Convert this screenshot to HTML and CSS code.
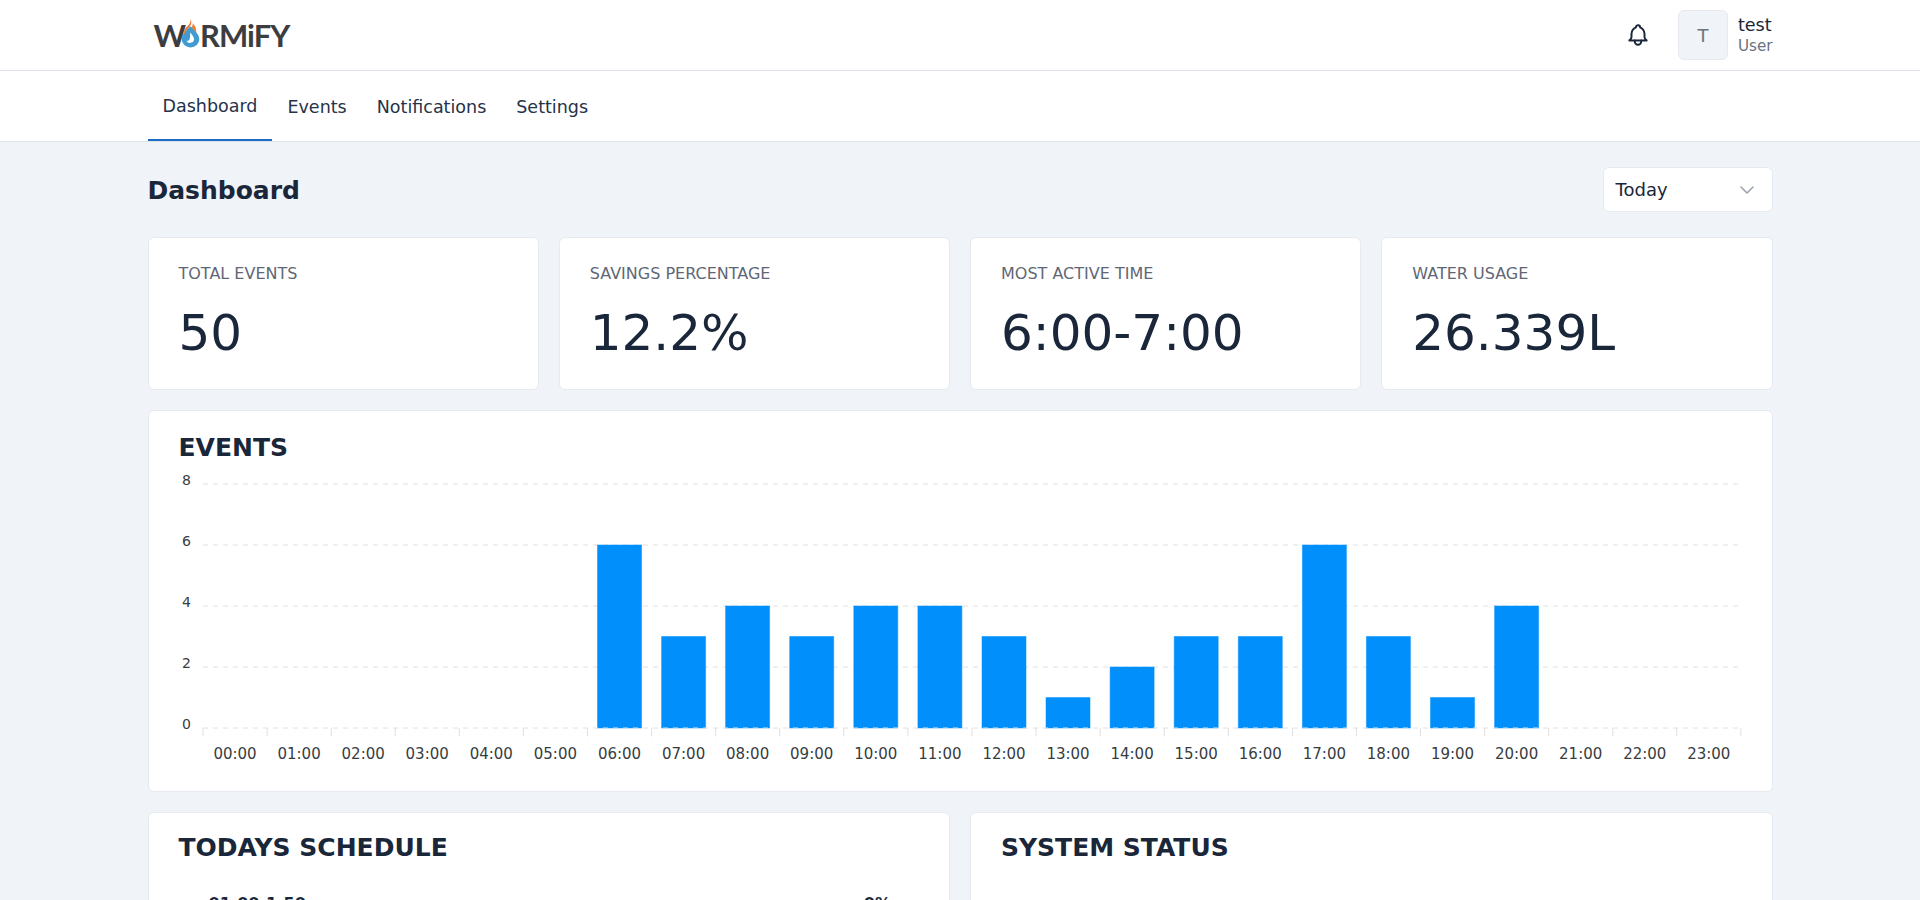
FILE: index.html
```html
<!DOCTYPE html>
<html lang="en">

<head>
    <meta charset="UTF-8">
    <meta name="viewport" content="width=device-width, initial-scale=1.0">
    <title>Wormify Dashboard</title>
    <link rel="stylesheet" href="styles.css">
</head>

<body>
    <div class="app">
        <header class="topbar">
            <div class="wrap topbar-row">
                <div class="logo">
                    <span>W</span>
                    <svg class="logo-drop" viewBox="0 0 18 28" aria-hidden="true">
                        <path d="M9 7c4 4 8.500 8 8.500 12.500a8.500 8 0 0 1-17 0C.5 15 5 11 9 7z" fill="#3f9bd0" />
                        <path d="M9 0c1.500 3 1 5-1 7.500C6 10 3.500 12 2.500 17 1.500 12 4 9 6 7c2-2 3.500-4 3-7z" fill="#ef7b2d" />
                        <path d="M11 4c3 3 4 6 3.500 10-1-2.500-2.500-4-4.500-6 1-1 1.300-2.500 1-4z" fill="#ef7b2d" />
                        <path d="M8.500 13c2.500 2.500 4 4.500 4 7a4 3.800 0 0 1-7.500 1c1.500.5 3-.5 3.500-3 .3-1.800.2-3.500 0-5z" fill="#fff" />
                    </svg>
                    <span class="logo-rest">RMiFY</span>
                </div>
                <div class="topbar-right">
                    <svg class="bell" viewBox="0 0 24 24" fill="none" stroke="#1a2639" stroke-width="1.8" stroke-linecap="round" stroke-linejoin="round" aria-hidden="true">
                        <path d="M10 5a2 2 0 1 1 4 0a7 7 0 0 1 4 6v3a4 4 0 0 0 2 3h-16a4 4 0 0 0 2 -3v-3a7 7 0 0 1 4 -6" />
                        <path d="M9 17v1a3 3 0 0 0 6 0v-1" />
                    </svg>
                    <div class="avatar">T</div>
                    <div class="user">
                        <div class="user-name">test</div>
                        <div class="user-role">User</div>
                    </div>
                </div>
            </div>
        </header>

        <nav class="tabs">
            <div class="wrap tabs-row">
                <a class="tab active">Dashboard</a>
                <a class="tab">Events</a>
                <a class="tab">Notifications</a>
                <a class="tab">Settings</a>
            </div>
        </nav>

        <main class="wrap">
            <div class="page-head">
                <h1 class="page-title">Dashboard</h1>
                <div class="range">
                    <span>Today</span>
                    <svg class="range-arrow" viewBox="0 0 14 8" fill="none" stroke="#9ca3af" stroke-width="1.6" stroke-linecap="round" stroke-linejoin="round" aria-hidden="true">
                        <path d="M1 1l6 6 6-6" />
                    </svg>
                </div>
            </div>

            <section class="stats">
                <div class="card stat">
                    <div class="stat-label">TOTAL EVENTS</div>
                    <div class="stat-value">50</div>
                </div>
                <div class="card stat">
                    <div class="stat-label">SAVINGS PERCENTAGE</div>
                    <div class="stat-value">12.2%</div>
                </div>
                <div class="card stat">
                    <div class="stat-label">MOST ACTIVE TIME</div>
                    <div class="stat-value">6:00-7:00</div>
                </div>
                <div class="card stat">
                    <div class="stat-label">WATER USAGE</div>
                    <div class="stat-value">26.339L</div>
                </div>
            </section>

            <section class="card chart-card">
                <h2 class="card-title">EVENTS</h2>
                <svg class="chart" viewBox="0 0 1623 320">
                    <!-- grid -->
                    <g class="grid">
                        <line x1="54" x2="1592" y1="14" y2="14" />
                        <line x1="54" x2="1592" y1="75" y2="75" />
                        <line x1="54" x2="1592" y1="136" y2="136" />
                        <line x1="54" x2="1592" y1="197" y2="197" />
                    </g>
                    <!-- bars -->
                    <g class="bars">
                        <rect x="448.500" y="75" width="44" height="183" />
                        <rect x="512.600" y="166.500" width="44" height="91.500" />
                        <rect x="576.600" y="136" width="44" height="122" />
                        <rect x="640.700" y="166.500" width="44" height="91.500" />
                        <rect x="704.800" y="136" width="44" height="122" />
                        <rect x="768.900" y="136" width="44" height="122" />
                        <rect x="833" y="166.500" width="44" height="91.500" />
                        <rect x="897" y="227.500" width="44" height="30.500" />
                        <rect x="961.100" y="197" width="44" height="61" />
                        <rect x="1025.200" y="166.500" width="44" height="91.500" />
                        <rect x="1089.300" y="166.500" width="44" height="91.500" />
                        <rect x="1153.400" y="75" width="44" height="183" />
                        <rect x="1217.400" y="166.500" width="44" height="91.500" />
                        <rect x="1281.500" y="227.500" width="44" height="30.500" />
                        <rect x="1345.600" y="136" width="44" height="122" />
                    </g>
                    <g class="grid">
                        <line x1="54" x2="1592" y1="258" y2="258" />
                    </g>
                    <!-- x ticks -->
                    <g class="ticks">
                        <line x1="54" x2="54" y1="258" y2="266.500" />
                        <line x1="118.1" x2="118.1" y1="258" y2="266.500" />
                        <line x1="182.200" x2="182.200" y1="258" y2="266.500" />
                        <line x1="246.200" x2="246.200" y1="258" y2="266.500" />
                        <line x1="310.300" x2="310.300" y1="258" y2="266.500" />
                        <line x1="374.400" x2="374.400" y1="258" y2="266.500" />
                        <line x1="438.500" x2="438.500" y1="258" y2="266.500" />
                        <line x1="502.600" x2="502.600" y1="258" y2="266.500" />
                        <line x1="566.600" x2="566.600" y1="258" y2="266.500" />
                        <line x1="630.700" x2="630.700" y1="258" y2="266.500" />
                        <line x1="694.800" x2="694.800" y1="258" y2="266.500" />
                        <line x1="758.900" x2="758.900" y1="258" y2="266.500" />
                        <line x1="823" x2="823" y1="258" y2="266.500" />
                        <line x1="887" x2="887" y1="258" y2="266.500" />
                        <line x1="951.100" x2="951.100" y1="258" y2="266.500" />
                        <line x1="1015.200" x2="1015.200" y1="258" y2="266.500" />
                        <line x1="1079.300" x2="1079.300" y1="258" y2="266.500" />
                        <line x1="1143.400" x2="1143.400" y1="258" y2="266.500" />
                        <line x1="1207.400" x2="1207.400" y1="258" y2="266.500" />
                        <line x1="1271.500" x2="1271.500" y1="258" y2="266.500" />
                        <line x1="1335.600" x2="1335.600" y1="258" y2="266.500" />
                        <line x1="1399.700" x2="1399.700" y1="258" y2="266.500" />
                        <line x1="1463.800" x2="1463.800" y1="258" y2="266.500" />
                        <line x1="1527.800" x2="1527.800" y1="258" y2="266.500" />
                        <line x1="1591.900" x2="1591.900" y1="258" y2="266.500" />
                    </g>
                    <!-- y labels -->
                    <g class="y-labels">
                        <text x="42" y="15">8</text>
                        <text x="42" y="76">6</text>
                        <text x="42" y="137">4</text>
                        <text x="42" y="198">2</text>
                        <text x="42" y="259">0</text>
                    </g>
                    <!-- x labels -->
                    <g class="x-labels">
                        <text x="86" y="289">00:00</text>
                        <text x="150.1" y="289">01:00</text>
                        <text x="214.2" y="289">02:00</text>
                        <text x="278.2" y="289">03:00</text>
                        <text x="342.3" y="289">04:00</text>
                        <text x="406.4" y="289">05:00</text>
                        <text x="470.5" y="289">06:00</text>
                        <text x="534.6" y="289">07:00</text>
                        <text x="598.6" y="289">08:00</text>
                        <text x="662.7" y="289">09:00</text>
                        <text x="726.8" y="289">10:00</text>
                        <text x="790.9" y="289">11:00</text>
                        <text x="855" y="289">12:00</text>
                        <text x="919" y="289">13:00</text>
                        <text x="983.1" y="289">14:00</text>
                        <text x="1047.2" y="289">15:00</text>
                        <text x="1111.3" y="289">16:00</text>
                        <text x="1175.4" y="289">17:00</text>
                        <text x="1239.4" y="289">18:00</text>
                        <text x="1303.5" y="289">19:00</text>
                        <text x="1367.6" y="289">20:00</text>
                        <text x="1431.7" y="289">21:00</text>
                        <text x="1495.8" y="289">22:00</text>
                        <text x="1559.8" y="289">23:00</text>
                    </g>
                </svg>
            </section>

            <section class="lower">
                <div class="card lower-card">
                    <h2 class="card-title">TODAYS SCHEDULE</h2>
                    <div class="schedule-row">
                        <span>01:00-1:50</span>
                        <span>0%</span>
                    </div>
                </div>
                <div class="card lower-card">
                    <h2 class="card-title">SYSTEM STATUS</h2>
                </div>
            </section>
        </main>
    </div>
</body>

</html>
```

FILE: styles.css
```css
* {
    box-sizing: border-box;
}

body {
    margin: 0;
    background: #f0f3f8;
    color: #1a2639;
    font-family: "DejaVu Sans", sans-serif;
}

.app {
    height: 100vh;
    overflow: hidden;
}

.wrap {
    width: 1625px;
    margin: 0 auto;
}

/* top bar */
.topbar {
    height: 71px;
    background: #fff;
    border-bottom: 1px solid #dde2ea;
}

.topbar-row {
    height: 70px;
    display: flex;
    align-items: center;
    justify-content: space-between;
}

.logo {
    display: flex;
    align-items: center;
    margin-left: 6px;
    color: #3d3d3f;
    font-family: "Lato", sans-serif;
    font-weight: 700;
    font-size: 31px;
    line-height: 1;
}

.logo-drop {
    width: 19px;
    height: 29px;
    margin: -3px 0 0 -5px;
}

.logo-rest {
    letter-spacing: -1px;
}

.topbar-right {
    display: flex;
    align-items: center;
}

.bell {
    width: 26px;
    height: 26px;
    margin-right: 27px;
}

.avatar {
    width: 50px;
    height: 50px;
    margin-right: 10px;
    display: flex;
    align-items: center;
    justify-content: center;
    background: #f0f3f8;
    border: 1px solid #e6eaf0;
    border-radius: 6px;
    color: #6b7280;
    font-size: 18px;
}

.user-name {
    font-size: 17.600px;
    line-height: 22px;
}

.user-role {
    color: #6b7280;
    font-size: 15.200px;
    line-height: 20px;
}

/* tabs */
.tabs {
    height: 71px;
    background: #fff;
    border-bottom: 1px solid #dde2ea;
}

.tabs-row {
    height: 70px;
    display: flex;
}

.tab {
    display: flex;
    align-items: center;
    padding: 2px 15px 0;
    font-size: 17.500px;
    color: #25324a;
}

.active {
    border-bottom: 2px solid #1c6bc7;
}

/* page */
.page-head {
    height: 95px;
    padding-top: 2px;
    display: flex;
    align-items: center;
    justify-content: space-between;
}

.page-title {
    margin: 0;
    font-size: 25px;
    font-weight: 700;
}

.range {
    width: 170px;
    height: 45px;
    margin-top: -2px;
    padding: 0 18px 0 12px;
    display: flex;
    align-items: center;
    justify-content: space-between;
    background: #fff;
    border: 1px solid #e6eaf0;
    border-radius: 6px;
    font-size: 18px;
}

.range-arrow {
    width: 14px;
    height: 8px;
}

.card {
    background: #fff;
    border: 1px solid #e6eaf0;
    border-radius: 6px;
}

.stats {
    display: grid;
    grid-template-columns: repeat(4, 1fr);
    gap: 20px;
}

.stat {
    height: 153px;
    padding: 26px 30px 0;
}

.stat-label {
    color: #5f6776;
    font-size: 16px;
    line-height: 20px;
}

.stat-value {
    margin-top: 19px;
    font-size: 50px;
    line-height: 60px;
}

.card-title {
    margin: 0;
    font-size: 25px;
    line-height: 30px;
    font-weight: 700;
}

.chart-card {
    height: 382px;
    margin-top: 20px;
    padding-top: 22px;
}

.chart-card .card-title {
    margin-left: 30px;
}

.chart {
    display: block;
    width: 1623px;
    height: 320px;
    margin-top: 7px;
}

.grid line {
    stroke: #e0e0e0;
    stroke-dasharray: 5 5;
}

.bars rect {
    fill: #008ffb;
    stroke: #008ffb;
    stroke-opacity: 0.5;
}

.ticks line {
    stroke: #e0e0e0;
}

.y-labels text {
    fill: #373d3f;
    font-size: 14px;
    text-anchor: end;
}

.x-labels text {
    fill: #373d3f;
    font-size: 15px;
    text-anchor: middle;
}

.lower {
    display: grid;
    grid-template-columns: 1fr 1fr;
    gap: 20px;
    margin-top: 20px;
}

.lower-card {
    height: 400px;
    padding: 20px 30px 0;
}

.schedule-row {
    display: flex;
    justify-content: space-between;
    margin-top: 31px;
    padding: 0 28px 0 30px;
    font-size: 16px;
    font-weight: 700;
}
```
